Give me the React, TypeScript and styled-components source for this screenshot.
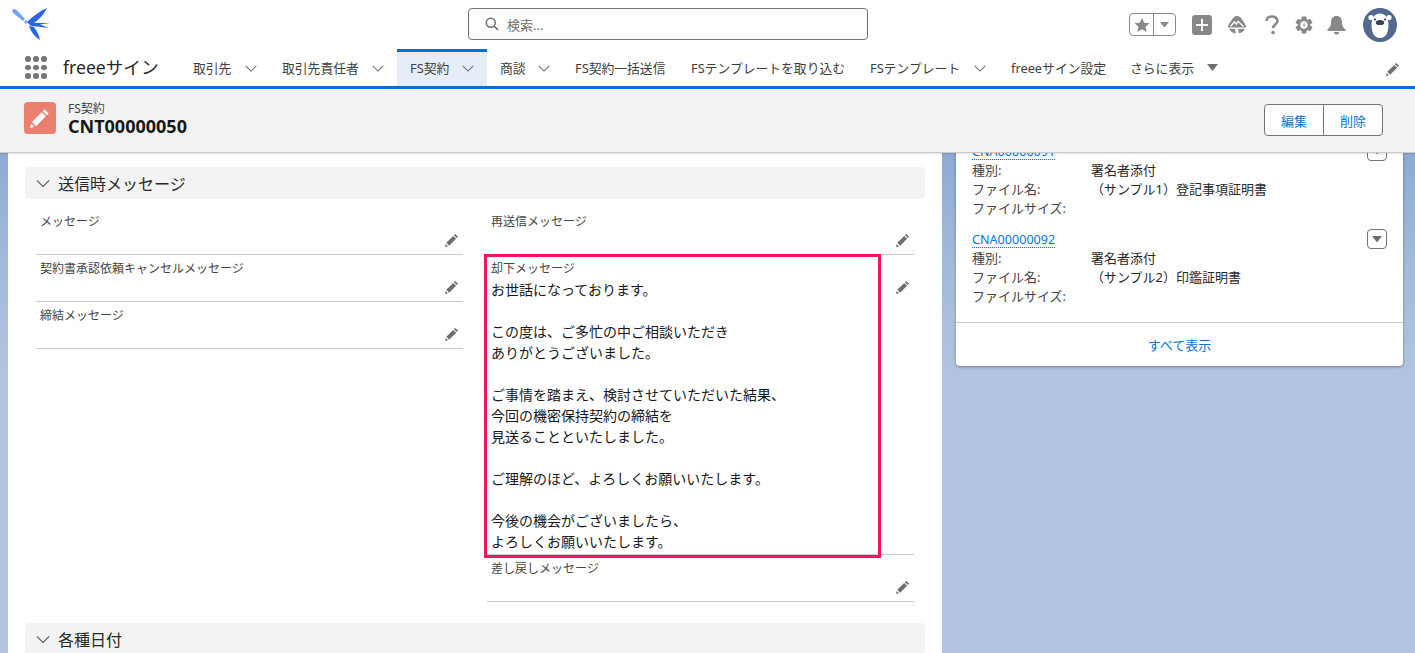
import React from 'react';
import styled, { createGlobalStyle } from 'styled-components';

const GlobalStyle = createGlobalStyle`
  html, body {
    margin: 0;
    padding: 0;
    background: #b0c4df;
    overflow: hidden;
  }
  body {
    font-family: "Noto Sans", "Noto Sans CJK JP", sans-serif;
    color: #181818;
  }
  * {
    box-sizing: border-box;
  }
`;

const Page = styled.div`
  width: 1415px;
  height: 653px;
  overflow: hidden;
  display: flex;
  flex-direction: column;
`;

const GlobalHeader = styled.header`
  height: 49px;
  flex: none;
  background: #fff;
  display: grid;
  grid-template-columns: 468px 400px 1fr;
  align-items: center;
  padding-right: 18px;
`;

const LogoWrap = styled.div`
  padding: 0 0 3px 11px;
  display: flex;
`;

const SearchBox = styled.div`
  height: 32px;
  margin-top: -1px;
  border: 1px solid #747474;
  border-radius: 4px;
  display: flex;
  align-items: center;
  gap: 8px;
  padding-left: 16px;
  font-size: 13px;
  color: #706e6b;
`;

const HeaderActions = styled.div`
  display: flex;
  align-items: center;
  justify-content: flex-end;
`;

const FavoriteGroup = styled.div`
  width: 47px;
  height: 23px;
  border: 1px solid #8a8a8a;
  border-radius: 4px;
  display: grid;
  grid-template-columns: 23px 1fr;
  align-items: center;
  justify-items: center;
  margin-right: 16px;
`;

const FavoriteStar = styled.span`
  display: flex;
`;

const FavoriteMenu = styled.span`
  border-left: 1px solid #8a8a8a;
  height: 100%;
  width: 100%;
  display: flex;
  align-items: center;
  justify-content: center;
`;

const HeaderIcon = styled.span<{ $gap?: number }>`
  display: flex;
  margin-right: ${(p) => p.$gap ?? 0}px;
`;

const NavBar = styled.nav`
  height: 40px;
  flex: none;
  background: #fff;
  border-bottom: 3px solid #0070d2;
  display: flex;
  align-items: stretch;
  position: relative;
`;

const Launcher = styled.div`
  width: 63px;
  padding-left: 25px;
  display: flex;
  align-items: center;
`;

const DotGrid = styled.div`
  display: grid;
  grid-template-columns: repeat(3, 5px);
  gap: 3px;
  & > i {
    width: 5.5px;
    height: 5.5px;
    border-radius: 50%;
    background: #767676;
  }
`;

const AppName = styled.div`
  width: 118px;
  padding-top: 5px;
  font-size: 17.6px;
  line-height: 26px;
  color: #282828;
`;

const Tab = styled.div<{ $active?: boolean; $w: number; $pad: number }>`
  width: ${(p) => p.$w}px;
  flex: none;
  display: flex;
  align-items: center;
  padding-left: ${(p) => p.$pad}px;
  font-size: 12.8px;
  color: #3e3e3c;
  white-space: nowrap;
  background: ${(p) => (p.$active ? '#e5eef8' : 'transparent')};
  box-shadow: ${(p) => (p.$active ? 'inset 0 3px 0 #0070d2' : 'none')};
  & > svg {
    margin-left: auto;
    margin-right: 12px;
  }
`;

const MoreTab = styled.div`
  display: flex;
  align-items: center;
  gap: 13px;
  padding-left: 12px;
  font-size: 12.8px;
  color: #3e3e3c;
`;

const NavEdit = styled.div`
  margin-left: auto;
  padding-right: 15px;
  padding-top: 3px;
  display: flex;
  align-items: center;
`;

const Highlights = styled.section`
  height: 64px;
  flex: none;
  background: #f3f3f3;
  border-bottom: 1px solid #c9c9c9;
  box-shadow: 0 1px 2px rgba(0, 0, 0, 0.12);
  display: flex;
  align-items: center;
  padding: 0 32px 1px 24px;
  position: relative;
  z-index: 2;
`;

const RecordIcon = styled.div`
  width: 32px;
  height: 32px;
  margin-top: -4px;
  border-radius: 4px;
  background: #eb7f6f;
  display: flex;
  align-items: center;
  justify-content: center;
  margin-right: 12px;
`;

const RecordTitle = styled.div`
  flex: 1;
  margin-top: -1px;
`;

const RecordType = styled.div`
  font-size: 12px;
  line-height: 14px;
  color: #444;
`;

const RecordName = styled.div`
  font-size: 18px;
  line-height: 21px;
  font-weight: 700;
  color: #181818;
`;

const ButtonGroup = styled.div`
  display: flex;
  height: 32px;
  border: 1px solid #747474;
  border-radius: 4px;
  background: #fff;
`;

const GroupButton = styled.div<{ $w: number }>`
  width: ${(p) => p.$w}px;
  display: flex;
  align-items: center;
  justify-content: center;
  font-size: 13px;
  color: #0176d3;
  & + & {
    border-left: 1px solid #747474;
  }
`;

const Content = styled.main`
  flex: 1;
  min-height: 0;
  display: grid;
  grid-template-columns: 934px 447px;
  column-gap: 14px;
  padding-left: 8px;
  background: linear-gradient(#8cabd3 0, #a3badb 110px, #b0c4df 220px);
`;

const DetailCard = styled.div`
  background: #fff;
  padding: 14px 17px 0;
  overflow: hidden;
`;

const SectionHeader = styled.div`
  height: 32px;
  width: 900px;
  background: #f3f3f3;
  border-radius: 4px;
  display: flex;
  align-items: center;
  gap: 7px;
  padding: 0 0 1px 10px;
  font-size: 16px;
  color: #282828;
`;

const FieldGrid = styled.div`
  display: grid;
  grid-template-columns: 427px 427px;
  column-gap: 24px;
  padding: 9px 0 0 11px;
  margin-bottom: 21px;
`;

const FieldColumn = styled.div`
  display: flex;
  flex-direction: column;
`;

const Field = styled.div<{ $tall?: boolean }>`
  height: ${(p) => (p.$tall ? 300 : 47)}px;
  border-bottom: 1px solid #c9c9c9;
  padding: 7px 4px 0;
  position: relative;
`;

const FieldLabel = styled.div`
  font-size: 12px;
  line-height: 14px;
  color: #444;
`;

const FieldBody = styled.div`
  font-size: 14px;
  line-height: 21px;
  color: #181818;
  margin-top: 3px;
  white-space: pre-line;
`;

const EditIcon = styled.span`
  position: absolute;
  right: 4.5px;
  top: 25px;
  display: flex;
`;

const Highlight = styled.div`
  position: absolute;
  left: -3px;
  top: -1px;
  width: 397px;
  height: 304px;
  border: 3px solid #f0175f;
  pointer-events: none;
`;

const SideColumn = styled.aside`
  min-width: 0;
`;

const SideCard = styled.div`
  background: #fff;
  border-radius: 0 0 4px 4px;
  box-shadow: 0 1px 3px rgba(0, 0, 0, 0.35);
  margin-top: -11px;
`;

const FileList = styled.div`
  padding: 0 16px 16px;
  border-bottom: 1px solid #c9c9c9;
`;

const FileItem = styled.div`
  position: relative;
  margin-bottom: 12px;
  &:last-child {
    margin-bottom: 0;
  }
`;

const FileLink = styled.span`
  display: block;
  font-size: 12.6px;
  line-height: 14px;
  margin-bottom: 1px;
  color: #0176d3;
  border-bottom: 1px dotted #0176d3;
`;

const FileLinkRow = styled.div`
  height: 19px;
  display: flex;
  align-items: flex-end;
`;

const FileRow = styled.div`
  display: grid;
  grid-template-columns: 119px 1fr;
  font-size: 13px;
  line-height: 19px;
  color: #444;
  & > b {
    font-weight: 400;
    color: #282828;
  }
`;

const MenuButton = styled.div`
  position: absolute;
  right: 0;
  top: -1px;
  width: 20px;
  height: 20px;
  border: 1px solid #747474;
  border-radius: 4px;
  background: #fff;
  display: flex;
  align-items: center;
  justify-content: center;
`;

const ViewAll = styled.div`
  height: 43px;
  display: flex;
  align-items: center;
  justify-content: center;
  font-size: 13px;
  color: #0176d3;
`;

const Chevron = ({ size = 16, color = '#706e6b' }: { size?: number; color?: string }) => (
  <svg width={size} height={size} viewBox="0 0 16 16" fill="none">
    <path d="M2 5.5l6 6 6-6" stroke={color} strokeWidth="1.3" />
  </svg>
);

const Caret = ({ w = 11, color = '#706e6b' }: { w?: number; color?: string }) => (
  <svg width={w} height={w * 0.64} viewBox="0 0 11 7">
    <path d="M0 0h11L5.5 7z" fill={color} />
  </svg>
);

const Pencil = ({ size = 14, color = '#706e6b' }: { size?: number; color?: string }) => (
  <svg width={size} height={size} viewBox="0 0 14 14">
    <path d="M10.2.9l2.9 2.9-1.3 1.3-2.9-2.9zM8.2 2.9l2.9 2.9-6.9 6.9-2.9-2.9zM.7 11l2.3 2.3-3 .7z" fill={color} />
  </svg>
);

const Logo = () => (
  <svg width="40" height="40" viewBox="0 0 40 40">
    <path d="M1.5 6.5C3 5.500 4.500 6 6 7.500L14 16l-2 2-9-7.500C1.500 9.500 1 8 1.500 6.500z" fill="#6ea2f5" />
    <path d="M36 5C29 8 22 13 16 19l2.500 2 4.500-1C29 16 33 11 36 5z" fill="#2864f0" />
    <path d="M17 20l22 0-10 1.500 9 3.500-12-1.500-6-.5z" fill="#2864f0" />
    <path d="M18 23l5 1c3 4 5 8 6 13-5-3-9-8-11-14z" fill="#2864f0" />
    <circle cx="15" cy="19" r="1.200" fill="#fff" stroke="#2864f0" strokeWidth=".8" />
  </svg>
);

const Bear = () => (
  <svg width="34" height="34" viewBox="0 0 34 34">
    <circle cx="17" cy="17" r="17" fill="#52698f" />
    <circle cx="8" cy="9.500" r="2.600" fill="#fff" />
    <circle cx="26" cy="9.500" r="2.600" fill="#fff" />
    <path d="M8.500 17c0-7 3.500-11.500 8.500-11.500S25.500 10 25.500 17c0 7-2.500 13-8.500 13S8.500 24 8.500 17z" fill="#fff" />
    <circle cx="12" cy="11.500" r="1.100" fill="#33415c" />
    <circle cx="22" cy="11.500" r="1.100" fill="#33415c" />
    <ellipse cx="17" cy="14.500" rx="4.200" ry="2.600" fill="#33415c" />
  </svg>
);

const GearIcon = () => (
  <svg width="18" height="18" viewBox="0 0 18 18">
    {[0, 60, 120, 180, 240, 300].map((deg) => (
      <rect key={deg} x="6.600" y="0.500" width="4.800" height="4" rx=".6" fill="#8a8886" transform={`rotate(${deg} 9 9)`} />
    ))}
    <circle cx="9" cy="9" r="6.400" fill="#8a8886" />
    <circle cx="9" cy="9" r="3.700" fill="#fff" />
    <path d="M9.800 6.300L7.600 9.500h1.500l-.9 2.300 2.300-3.300H9z" fill="#8a8886" />
  </svg>
);

const TrailIcon = () => (
  <svg width="20" height="20" viewBox="0 0 20 20">
    <path d="M10 1c2.500 0 4 1.800 5.500 4.200 1.300 2 3 3.800 3.500 6 .2 1-.4 1.300-1.300 1.300H2.300c-.9 0-1.500-.3-1.300-1.300.5-2.200 2.200-4 3.500-6C6 2.800 7.500 1 10 1z" fill="#8a8886" />
    <path d="M3.500 11.500l3.800-4.700 2 2.400 1.700-2.900 5.500 5.200" fill="none" stroke="#fff" strokeWidth="1.300" />
    <path d="M2.200 13.800l6 .2.600 4.500c-3-.3-5.400-2-6.600-4.700zM17.800 13.800l-6.800.2 1 4.300c2.700-.6 4.800-2 5.800-4.500z" fill="#8a8886" />
  </svg>
);

const tabs = [
  { label: '取引先', w: 89, pad: 12, menu: true },
  { label: '取引先責任者', w: 127, pad: 12, menu: true },
  { label: 'FS契約', w: 90, pad: 13, menu: true, active: true },
  { label: '商談', w: 76, pad: 13, menu: true },
  { label: 'FS契約一括送信', w: 116, pad: 12 },
  { label: 'FSテンプレートを取り込む', w: 179, pad: 12 },
  { label: 'FSテンプレート', w: 141, pad: 12, menu: true },
  { label: 'freeeサイン設定', w: 119, pad: 12 },
];

const leftFields = ['メッセージ', '契約書承認依頼キャンセルメッセージ', '締結メッセージ'];

const rejectMessage = `お世話になっております。

この度は、ご多忙の中ご相談いただき
ありがとうございました。

ご事情を踏まえ、検討させていただいた結果、
今回の機密保持契約の締結を
見送ることといたしました。

ご理解のほど、よろしくお願いいたします。

今後の機会がございましたら、
よろしくお願いいたします。`;

const files = [
  { id: 'CNA00000091', name: '（サンプル1）登記事項証明書' },
  { id: 'CNA00000092', name: '（サンプル2）印鑑証明書' },
];

const App = () => {
  return (
    <Page>
      <GlobalStyle />
      <GlobalHeader>
        <LogoWrap>
          <Logo />
        </LogoWrap>
        <SearchBox>
          <svg width="14" height="14" viewBox="0 0 14 14" fill="none">
            <circle cx="5.800" cy="5.800" r="4.500" stroke="#706e6b" strokeWidth="1.500" />
            <path d="M9 9l4 4" stroke="#706e6b" strokeWidth="1.700" />
          </svg>
          検索...
        </SearchBox>
        <HeaderActions>
          <FavoriteGroup>
            <FavoriteStar>
              <svg width="16" height="16" viewBox="0 0 16 16">
                <path d="M8 .8l2.200 4.900 5.300.5-4 3.500 1.200 5.200L8 12.200l-4.700 2.700 1.200-5.200-4-3.500 5.300-.5z" fill="#8a8886" />
              </svg>
            </FavoriteStar>
            <FavoriteMenu>
              <Caret w={9} color="#8a8886" />
            </FavoriteMenu>
          </FavoriteGroup>
          <HeaderIcon $gap={15}>
            <svg width="20" height="20" viewBox="0 0 20 20">
              <rect width="20" height="20" rx="3" fill="#8a8886" />
              <path d="M9 4h2v5h5v2h-5v5H9v-5H4V9h5z" fill="#fff" />
            </svg>
          </HeaderIcon>
          <HeaderIcon $gap={18}>
            <TrailIcon />
          </HeaderIcon>
          <HeaderIcon $gap={16}>
            <svg width="14" height="20" viewBox="0 0 14 20" fill="none">
              <path d="M1.500 6C1.500 3 4 1.500 7 1.500s5.500 1.600 5.500 4.400c0 3.400-4.500 3.600-4.500 7.100" stroke="#8a8886" strokeWidth="2.600" />
              <circle cx="8" cy="17.500" r="1.800" fill="#8a8886" />
            </svg>
          </HeaderIcon>
          <HeaderIcon $gap={14}>
            <GearIcon />
          </HeaderIcon>
          <HeaderIcon $gap={17}>
            <svg width="19" height="20" viewBox="0 0 19 20">
              <path d="M9.500 1c3.500 0 5.500 2.700 5.500 6 0 4 1 5.500 3.500 7.500V16H.5v-1.500C3 12.500 4 11 4 7c0-3.300 2-6 5.500-6z" fill="#8a8886" />
              <path d="M7 17h5a2.500 2.500 0 0 1-5 0z" fill="#8a8886" />
            </svg>
          </HeaderIcon>
          <HeaderIcon>
            <Bear />
          </HeaderIcon>
        </HeaderActions>
      </GlobalHeader>

      <NavBar>
        <Launcher>
          <DotGrid>
            {Array.from({ length: 9 }).map((_, i) => (
              <i key={i} />
            ))}
          </DotGrid>
        </Launcher>
        <AppName>freeeサイン</AppName>
        {tabs.map((t) => (
          <Tab key={t.label} $w={t.w} $pad={t.pad} $active={t.active}>
            {t.label}
            {t.menu && <Chevron size={14} />}
          </Tab>
        ))}
        <MoreTab>
          さらに表示
          <Caret w={11} />
        </MoreTab>
        <NavEdit>
          <Pencil size={14} />
        </NavEdit>
      </NavBar>

      <Highlights>
        <RecordIcon>
          <Pencil size={20} color="#fff" />
        </RecordIcon>
        <RecordTitle>
          <RecordType>FS契約</RecordType>
          <RecordName>CNT00000050</RecordName>
        </RecordTitle>
        <ButtonGroup>
          <GroupButton $w={58}>編集</GroupButton>
          <GroupButton $w={59}>削除</GroupButton>
        </ButtonGroup>
      </Highlights>

      <Content>
        <DetailCard>
          <SectionHeader>
            <Chevron />
            送信時メッセージ
          </SectionHeader>
          <FieldGrid>
            <FieldColumn>
              {leftFields.map((label) => (
                <Field key={label}>
                  <FieldLabel>{label}</FieldLabel>
                  <EditIcon>
                    <Pencil />
                  </EditIcon>
                </Field>
              ))}
            </FieldColumn>
            <FieldColumn>
              <Field>
                <FieldLabel>再送信メッセージ</FieldLabel>
                <EditIcon>
                  <Pencil />
                </EditIcon>
              </Field>
              <Field $tall>
                <FieldLabel>却下メッセージ</FieldLabel>
                <FieldBody>{rejectMessage}</FieldBody>
                <EditIcon>
                  <Pencil />
                </EditIcon>
                <Highlight />
              </Field>
              <Field>
                <FieldLabel>差し戻しメッセージ</FieldLabel>
                <EditIcon>
                  <Pencil />
                </EditIcon>
              </Field>
            </FieldColumn>
          </FieldGrid>
          <SectionHeader>
            <Chevron />
            各種日付
          </SectionHeader>
        </DetailCard>

        <SideColumn>
          <SideCard>
            <FileList>
              {files.map((f) => (
                <FileItem key={f.id}>
                  <FileLinkRow>
                    <FileLink>{f.id}</FileLink>
                  </FileLinkRow>
                  <MenuButton>
                    <Caret w={10} />
                  </MenuButton>
                  <FileRow>
                    種別:<b>署名者添付</b>
                  </FileRow>
                  <FileRow>
                    ファイル名:<b>{f.name}</b>
                  </FileRow>
                  <FileRow>ファイルサイズ:</FileRow>
                </FileItem>
              ))}
            </FileList>
            <ViewAll>すべて表示</ViewAll>
          </SideCard>
        </SideColumn>
      </Content>
    </Page>
  );
};

export default App;
